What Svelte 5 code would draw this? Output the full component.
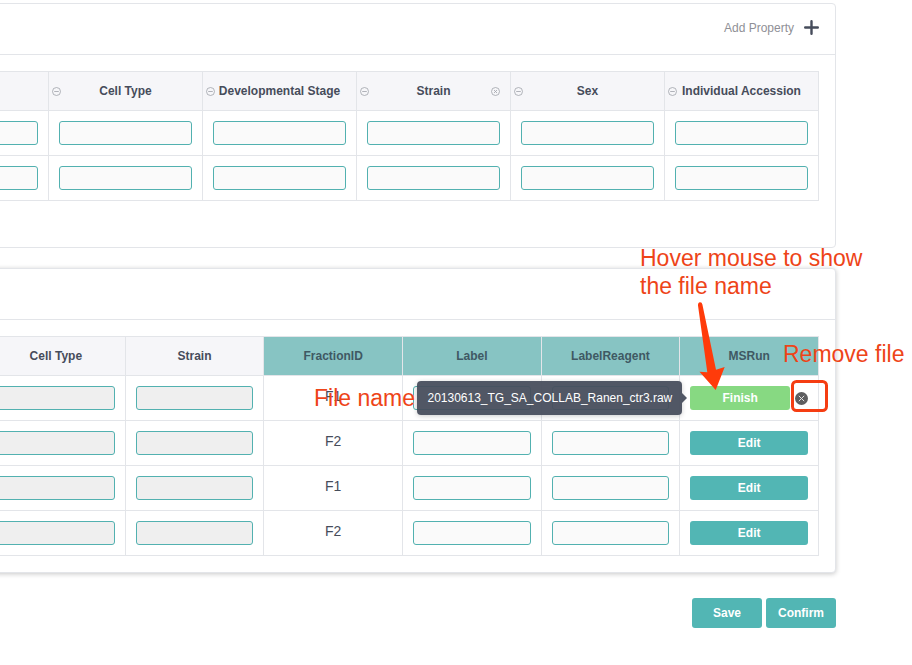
<script>
  const properties = [
    { name: 'Organism Part' },
    { name: 'Cell Type', collapse: true },
    { name: 'Developmental Stage', collapse: true },
    { name: 'Strain', collapse: true, removable: true },
    { name: 'Sex', collapse: true },
    { name: 'Individual Accession', collapse: true },
  ];
  const sampleRows = [1, 2];

  const fileColumns = [
    { name: 'Cell Type' },
    { name: 'Strain' },
    { name: 'FractionID', key: true },
    { name: 'Label', key: true },
    { name: 'LabelReagent', key: true },
    { name: 'MSRun', key: true },
  ];
  let runs = $state([
    { fraction: 'F1', file: '20130613_TG_SA_COLLAB_Ranen_ctr3.raw' },
    { fraction: 'F2', file: '' },
    { fraction: 'F1', file: '' },
    { fraction: 'F2', file: '' },
  ]);
</script>

<main>
  <section class="card samples">
    <header>
      <button class="add" type="button">
        Add Property
        <svg width="15" height="15" viewBox="0 0 15 15" aria-hidden="true">
          <path d="M7.5 1.2V13.8M1.2 7.5H13.8" stroke="#464c5b" stroke-width="2.4" stroke-linecap="round" />
        </svg>
      </button>
    </header>
    <div class="body">
      <table>
        <thead>
          <tr>
            {#each properties as p, i}
              <th>
                {#if p.collapse}
                  <button class="mark start" type="button" aria-label="Collapse {p.name}">
                    <svg width="9" height="9" viewBox="0 0 9 9"><circle cx="4.5" cy="4.5" r="4" /><path d="M2.2 4.5H6.8" /></svg>
                  </button>
                {/if}
                {#if i > 0}{p.name}{/if}
                {#if p.removable}
                  <button class="mark end" type="button" aria-label="Remove {p.name}">
                    <svg width="9" height="9" viewBox="0 0 9 9"><circle cx="4.5" cy="4.5" r="4" /><path d="M3 3L6 6M6 3L3 6" /></svg>
                  </button>
                {/if}
              </th>
            {/each}
          </tr>
        </thead>
        <tbody>
          {#each sampleRows as row}
            <tr>
              {#each properties as p}
                <td><input type="text" aria-label="{p.name}, sample {row}" /></td>
              {/each}
            </tr>
          {/each}
        </tbody>
      </table>
    </div>
  </section>

  <section class="card files">
    <header></header>
    <div class="body">
      <table>
        <thead>
          <tr>
            {#each fileColumns as c}
              <th class:key={c.key}>{c.name}</th>
            {/each}
          </tr>
        </thead>
        <tbody>
          {#each runs as run, i}
            <tr>
              <td><input type="text" disabled aria-label="Cell type, run {i + 1}" /></td>
              <td><input type="text" disabled aria-label="Strain, run {i + 1}" /></td>
              <td class="fraction">{run.fraction}</td>
              <td><input type="text" aria-label="Label, run {i + 1}" /></td>
              <td><input type="text" aria-label="Label reagent, run {i + 1}" /></td>
              <td>
                {#if run.file}
                  <div class="run">
                    <button class="btn finish" type="button" aria-describedby="tip-{i}">Finish</button>
                    <button class="remove" type="button" aria-label="Remove file" onclick={() => (run.file = '')}>
                      <svg width="13" height="13" viewBox="0 0 13 13">
                        <circle cx="6.5" cy="6.5" r="6.5" fill="#5e5e60" />
                        <path d="M3.8 3.8L9.2 9.2M9.2 3.8L3.8 9.2" stroke="#e4e4e4" stroke-width="1" />
                      </svg>
                    </button>
                    <div class="tip" role="tooltip" id="tip-{i}">{run.file}</div>
                  </div>
                {:else}
                  <button class="btn edit" type="button">Edit</button>
                {/if}
              </td>
            </tr>
          {/each}
        </tbody>
      </table>
    </div>

    <p class="note hover">Hover mouse to show<br />the file name</p>
    <p class="note drop">Remove file</p>
    <p class="note name">File name</p>
    <svg class="pointer" width="140" height="120" viewBox="0 0 140 120" aria-hidden="true">
      <path d="M3 5.5Q2.8 2.5 5 2.3Q7 2.2 7.4 4.5L21 69.7L29.7 67L20.7 90L4.5 71.7L12.3 72.3Z" fill="#ff3b0a" />
      <rect x="97.5" y="81.5" width="34" height="29" rx="4" fill="none" stroke="#f53d12" stroke-width="3" />
    </svg>
  </section>

  <footer>
    <button class="btn action" type="button">Save</button>
    <button class="btn action" type="button">Confirm</button>
  </footer>
</main>

<style>
  :global(body) {
    margin: 0;
    background: #fff;
  }
  main {
    padding: 3px 76px 36px 0;
    overflow: hidden;
    font: 12px/18px 'Liberation Sans', Arial, sans-serif;
    color: #464c5b;
  }
  button,
  input {
    font: inherit;
    box-sizing: border-box;
  }
  button {
    padding: 0;
    border: 0;
    background: none;
    color: inherit;
    cursor: pointer;
  }
  .card {
    position: relative;
    border: 1px solid #e3e5e9;
    border-radius: 4px;
    background: #fff;
  }
  .samples {
    margin-left: -123px;
  }
  .samples .body {
    padding-bottom: 46px;
  }
  .files {
    margin: 20px 0 25px -31px;
    box-shadow: 0 1px 5px rgba(0, 0, 0, 0.22);
  }
  header {
    display: flex;
    align-items: center;
    justify-content: flex-end;
    height: 50px;
    padding: 0 16px;
    border-bottom: 1px solid #e3e5e9;
  }
  .add {
    display: flex;
    align-items: center;
    gap: 10px;
    padding-bottom: 3px;
    color: #8f9096;
  }
  .body {
    padding: 16px;
  }
  table {
    width: 100%;
    table-layout: fixed;
    border-collapse: separate;
    border-spacing: 0;
    border: solid #e3e5e9;
    border-width: 1px 0 0 1px;
  }
  th,
  td {
    box-sizing: border-box;
    border: solid #e3e5e9;
    border-width: 0 1px 1px 0;
    text-align: center;
  }
  th {
    position: relative;
    height: 39px;
    padding: 0;
    background: #f6f6f9;
    white-space: nowrap;
  }
  th.key {
    background: #87c4c3;
    color: #3f5963;
  }
  td {
    height: 45px;
    padding: 10px;
  }
  td.fraction {
    padding: 8px 10px 12px;
    font-size: 14px;
  }
  .mark {
    position: absolute;
    top: 15px;
    display: flex;
  }
  .mark.start {
    left: 3px;
  }
  .mark.end {
    right: 10px;
  }
  .mark svg {
    fill: none;
    stroke: #a0a2aa;
    stroke-width: 0.8;
  }
  input {
    display: block;
    width: 100%;
    height: 24px;
    padding: 0 6px;
    border: 1px solid #52b1b0;
    border-radius: 3px;
    background: #fafafa;
  }
  input:disabled {
    background: #efefef;
  }
  .btn {
    display: block;
    height: 24px;
    border-radius: 3px;
    background: #52b6b4;
    color: #fff;
    font-weight: bold;
  }
  .edit {
    width: 100%;
  }
  .run {
    position: relative;
    display: flex;
    align-items: center;
    gap: 5px;
  }
  .finish {
    width: 100px;
    background: #87d982;
  }
  .remove {
    display: flex;
  }
  .tip {
    position: absolute;
    top: -5px;
    right: calc(100% + 8px);
    padding: 8px 10px;
    border-radius: 4px;
    background: rgba(70, 76, 91, 0.94);
    box-shadow: 0 1px 5px rgba(0, 0, 0, 0.2);
    color: #fff;
    white-space: nowrap;
  }
  .tip::after {
    content: '';
    position: absolute;
    top: 12px;
    left: 100%;
    border: 5px solid transparent;
    border-right-width: 0;
    border-left-color: rgba(70, 76, 91, 0.94);
  }
  .note {
    position: absolute;
    margin: 0;
    color: #ee4418;
    font-size: 23px;
    line-height: 28px;
    white-space: nowrap;
  }
  .hover {
    top: -25px;
    left: calc(100% - 195px);
  }
  .drop {
    top: 71px;
    left: calc(100% - 52px);
  }
  .name {
    top: 115px;
    left: calc(100% - 521px);
  }
  .pointer {
    position: absolute;
    top: 31px;
    left: calc(100% - 140px);
    pointer-events: none;
  }
  footer {
    display: flex;
    justify-content: flex-end;
    gap: 4px;
  }
  .action {
    width: 70px;
    height: 30px;
  }
</style>
